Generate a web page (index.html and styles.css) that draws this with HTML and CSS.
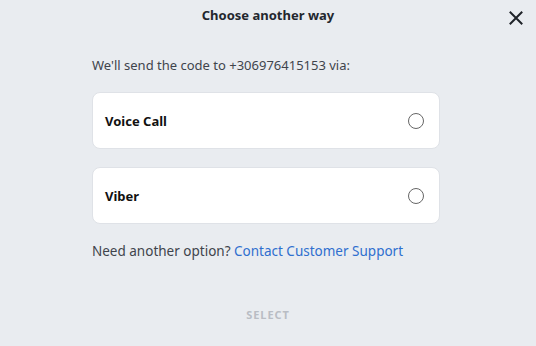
FILE: index.html
```html
<!DOCTYPE html>
<html>
<head>
<meta charset="utf-8">
<link rel="stylesheet" href="styles.css">
</head>
<body>
<div class="dialog">
  <div class="header">
    <h1 class="title">Choose another way</h1>
    <button class="close" aria-label="Close">
      <svg width="14" height="14" viewBox="0 0 14 14"><path d="M1.5 1.5 L12.5 12.5 M12.5 1.5 L1.5 12.5" stroke="#1f2329" stroke-width="2" stroke-linecap="square"/></svg>
    </button>
  </div>
  <div class="content">
    <p class="lead">We'll send the code to +306976415153 via:</p>
    <div class="options">
      <label class="option"><span class="option-label">Voice Call</span><span class="radio"></span></label>
      <label class="option"><span class="option-label">Viber</span><span class="radio"></span></label>
    </div>
    <p class="help">Need another option? <a class="link" href="#">Contact Customer Support</a></p>
  </div>
  <div class="footer"><button class="select">SELECT</button></div>
</div>
</body>
</html>
```
FILE: styles.css
```css
html, body {
  margin: 0;
  padding: 0;
  background: #e9ecf0;
  font-family: "Noto Sans", "Open Sans", sans-serif;
}
.dialog {
  width: 536px;
  height: 346px;
  display: flex;
  flex-direction: column;
}
.header {
  position: relative;
  height: 32px;
  display: flex;
  align-items: center;
  justify-content: center;
}
.title {
  margin: 0;
  font-size: 13px;
  font-weight: 700;
  color: #23272e;
  transform: translateY(-1px);
}
.close {
  position: absolute;
  right: 13px;
  top: 11px;
  padding: 0;
  border: 0;
  background: none;
  width: 14px;
  height: 14px;
  display: flex;
}
.content {
  padding: 0 96px 0 92px;
}
.lead {
  margin: 24px 0 0;
  font-size: 13px;
  line-height: 18px;
  color: #40444c;
}
.options {
  margin-top: 18px;
  display: flex;
  flex-direction: column;
  gap: 18px;
}
.option {
  height: 57px;
  box-sizing: border-box;
  background: #fff;
  border-radius: 8px;
  border: 1px solid #dfe2e7;
  display: flex;
  align-items: center;
  justify-content: space-between;
  padding: 0 15px 0 12px;
}
.option-label {
  font-size: 13px;
  font-weight: 700;
  color: #111;
}
.radio {
  width: 14px;
  height: 14px;
  border: 1.5px solid #666;
  border-radius: 50%;
}
.help {
  margin: 18px 0 0;
  font-size: 13.5px;
  line-height: 18px;
  color: #40444c;
}
.link {
  color: #2f6fcf;
  text-decoration: none;
}
.footer {
  margin-top: 47px;
  display: flex;
  justify-content: center;
}
.select {
  border: 0;
  background: none;
  font-family: inherit;
  font-size: 11px;
  font-weight: 700;
  color: #b9bdc4;
  padding: 0;
  letter-spacing: 0.9px;
}
```
